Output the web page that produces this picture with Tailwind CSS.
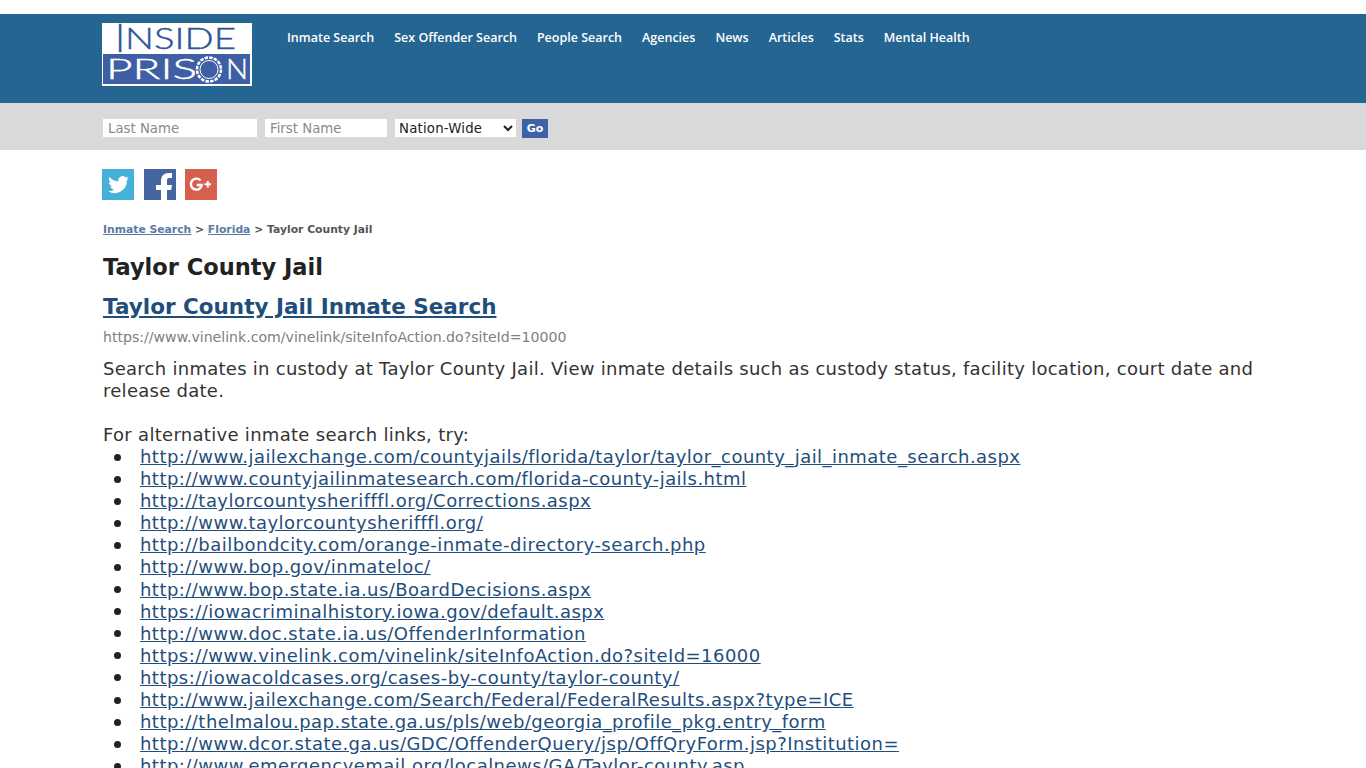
<!DOCTYPE html>
<html lang="en">
<head>
    <meta charset="UTF-8" />
    <title>Taylor County Jail</title>
    <script src="https://cdn.jsdelivr.net/npm/@tailwindcss/browser@4"></script>
</head>
<body class="h-[768px] overflow-hidden bg-white font-['DejaVu_Sans',sans-serif] text-[#222]">
    <!-- header -->
    <header class="mt-[14px] h-[89px] bg-[#256592] pl-[102px] pt-[9px] flex items-start">
        <a href="#" class="block w-[150px] h-[63px] shrink-0">
            <svg viewBox="0 0 150 63" class="w-[150px] h-[63px] font-['Lato',sans-serif] font-light">
                <rect width="150" height="63" fill="#fff" />
                <rect x="1" y="31" width="147" height="30" fill="#3e5fa3" />
                <text x="13" y="29" font-size="39" fill="#2f5597" stroke="#2f5597" stroke-width=".4">I</text>
                <text x="23" y="26" font-size="29" fill="#2f5597" stroke="#2f5597" stroke-width=".4" textLength="111" lengthAdjust="spacingAndGlyphs">NSIDE</text>
                <text x="4" y="56" font-size="27" fill="#fff" stroke="#fff" stroke-width=".4" textLength="91" lengthAdjust="spacingAndGlyphs">PRIS</text>
                <text x="97" y="56" font-size="27" fill="#fff" textLength="20" lengthAdjust="spacingAndGlyphs">O</text>
                <circle cx="107" cy="46.500" r="12" fill="#3e5fa3" stroke="#fff" stroke-width="2.500" stroke-dasharray="3.500 1.200" />
                <circle cx="107" cy="46.500" r="9" fill="none" stroke="#fff" stroke-width="1" />
                <text x="124" y="56" font-size="27" fill="#fff" stroke="#fff" stroke-width=".4" textLength="22" lengthAdjust="spacingAndGlyphs">N</text>
            </svg>
        </a>
        <nav class="flex ml-[35px] gap-[20px] pt-[6px] text-[12.500px] leading-[18px] font-semibold text-white font-['Open_Sans',sans-serif]">
            <a href="#">Inmate Search</a>
            <a href="#">Sex Offender Search</a>
            <a href="#">People Search</a>
            <a href="#">Agencies</a>
            <a href="#">News</a>
            <a href="#">Articles</a>
            <a href="#">Stats</a>
            <a href="#">Mental Health</a>
        </nav>
    </header>

    <!-- search -->
    <form class="h-[47px] bg-[#d9d9d9] pl-[103px] pt-[16px] flex items-start gap-[8px] text-[13.300px]">
        <input class="w-[154px] h-[18px] bg-white px-[5px] pt-[2px] placeholder-[#8a8a8a]" placeholder="Last Name" />
        <input class="w-[122px] h-[18px] bg-white px-[5px] pt-[2px] placeholder-[#8a8a8a]" placeholder="First Name" />
        <select class="w-[121px] h-[18px] bg-white text-[#222] tracking-[0.2px]"><option>Nation-Wide</option></select>
        <button type="button" class="-ml-[2px] w-[26px] h-[19px] pt-[2px] bg-[#3f62a6] text-white text-[11px] font-bold">Go</button>
    </form>

    <main class="pl-[102px] pr-[102px]">
        <div class="flex mt-[19px] h-[31px]">
            <a href="#" class="w-[32px] h-[31px] bg-[#45b0d8] flex items-center justify-center">
                <svg viewBox="0 0 24 24" class="w-[25px] h-[25px]" fill="#fff"><path d="M22 5.900c-.7.3-1.500.5-2.300.6.800-.5 1.500-1.300 1.800-2.200-.8.5-1.700.8-2.600 1a4.100 4.100 0 0 0-7 3.700C8.500 8.800 5.500 7.200 3.400 4.700c-1.100 1.900-.5 4.300 1.300 5.500-.7 0-1.300-.2-1.900-.5 0 2 1.400 3.700 3.300 4.100-.6.200-1.200.2-1.900.1.500 1.600 2 2.800 3.800 2.800A8.300 8.300 0 0 1 2 18.400 11.700 11.700 0 0 0 20 8c.8-.6 1.500-1.300 2-2.100z"/></svg>
            </a>
            <a href="#" class="ml-[10px] w-[32px] h-[31px] bg-[#45659f] overflow-hidden">
                <svg viewBox="0 0 32 31" class="w-[32px] h-[31px]" fill="#fff"><path d="M17 31V21h-5v-5h5v-4c0-5 3-8 7.500-8H28v5h-3c-1.500 0-2 1-2 2.500V16h5l-.8 5H23v10z"/></svg>
            </a>
            <a href="#" class="ml-[9px] w-[32px] h-[31px] bg-[#d6604e]">
                <svg viewBox="0 0 32 31" class="w-[32px] h-[31px]" fill="none" stroke="#fff" stroke-width="2.400"><path d="M15.500 11.500a5.500 5.500 0 1 0 1.300 4.500h-5"/><path d="M22.800 12v6.500M19.500 15.200H26" stroke-width="2"/></svg>
            </a>
        </div>

        <div class="mt-[22px] text-[10.800px] leading-[16px] font-bold text-[#555] pl-[1px]">
            <a href="#" class="underline text-[#5a7ba3]">Inmate Search</a> &gt; <a href="#" class="underline text-[#5a7ba3]">Florida</a> &gt; Taylor County Jail
        </div>

        <h1 class="mt-[14px] pl-[1px] text-[22.500px] leading-[30px] font-bold text-[#222]">Taylor County Jail</h1>
        <h2 class="mt-[10px] pl-[1px] text-[21.500px] leading-[30px] font-bold"><a href="#" class="underline text-[#1f4e7c]">Taylor County Jail Inmate Search</a></h2>
        <div class="mt-[5px] pl-[1px] text-[14.120px] leading-[20px] text-[#808080]">https://www.vinelink.com/vinelink/siteInfoAction.do?siteId=10000</div>

        <div class="mt-[11px] pl-[1px] text-[18px] leading-[22px] tracking-[0.46px] text-[#333]">
            <p class="tracking-[0.27px]">Search inmates in custody at Taylor County Jail. View inmate details such as custody status, facility location, court date and release date.</p>
            <p class="mt-[22px] tracking-[0.3px]">For alternative inmate search links, try:</p>
            <ul class="pl-[11px] leading-[22.100px] text-[#1f4e7c] [&_a]:underline [&_li]:flex [&_li]:items-center [&_i]:w-[7px] [&_i]:h-[7px] [&_i]:mr-[19px] [&_i]:rounded-full [&_i]:bg-[#222]">
                <li><i></i><a href="#">http://www.jailexchange.com/countyjails/florida/taylor/taylor_county_jail_inmate_search.aspx</a></li>
                <li><i></i><a href="#">http://www.countyjailinmatesearch.com/florida-county-jails.html</a></li>
                <li><i></i><a href="#">http://taylorcountysherifffl.org/Corrections.aspx</a></li>
                <li><i></i><a href="#">http://www.taylorcountysherifffl.org/</a></li>
                <li><i></i><a href="#">http://bailbondcity.com/orange-inmate-directory-search.php</a></li>
                <li><i></i><a href="#">http://www.bop.gov/inmateloc/</a></li>
                <li><i></i><a href="#">http://www.bop.state.ia.us/BoardDecisions.aspx</a></li>
                <li><i></i><a href="#">https://iowacriminalhistory.iowa.gov/default.aspx</a></li>
                <li><i></i><a href="#">http://www.doc.state.ia.us/OffenderInformation</a></li>
                <li><i></i><a href="#">https://www.vinelink.com/vinelink/siteInfoAction.do?siteId=16000</a></li>
                <li><i></i><a href="#">https://iowacoldcases.org/cases-by-county/taylor-county/</a></li>
                <li><i></i><a href="#">http://www.jailexchange.com/Search/Federal/FederalResults.aspx?type=ICE</a></li>
                <li><i></i><a href="#">http://thelmalou.pap.state.ga.us/pls/web/georgia_profile_pkg.entry_form</a></li>
                <li><i></i><a href="#">http://www.dcor.state.ga.us/GDC/OffenderQuery/jsp/OffQryForm.jsp?Institution=</a></li>
                <li><i></i><a href="#">http://www.emergencyemail.org/localnews/GA/Taylor-county.asp</a></li>
            </ul>
        </div>
    </main>
</body>
</html>
